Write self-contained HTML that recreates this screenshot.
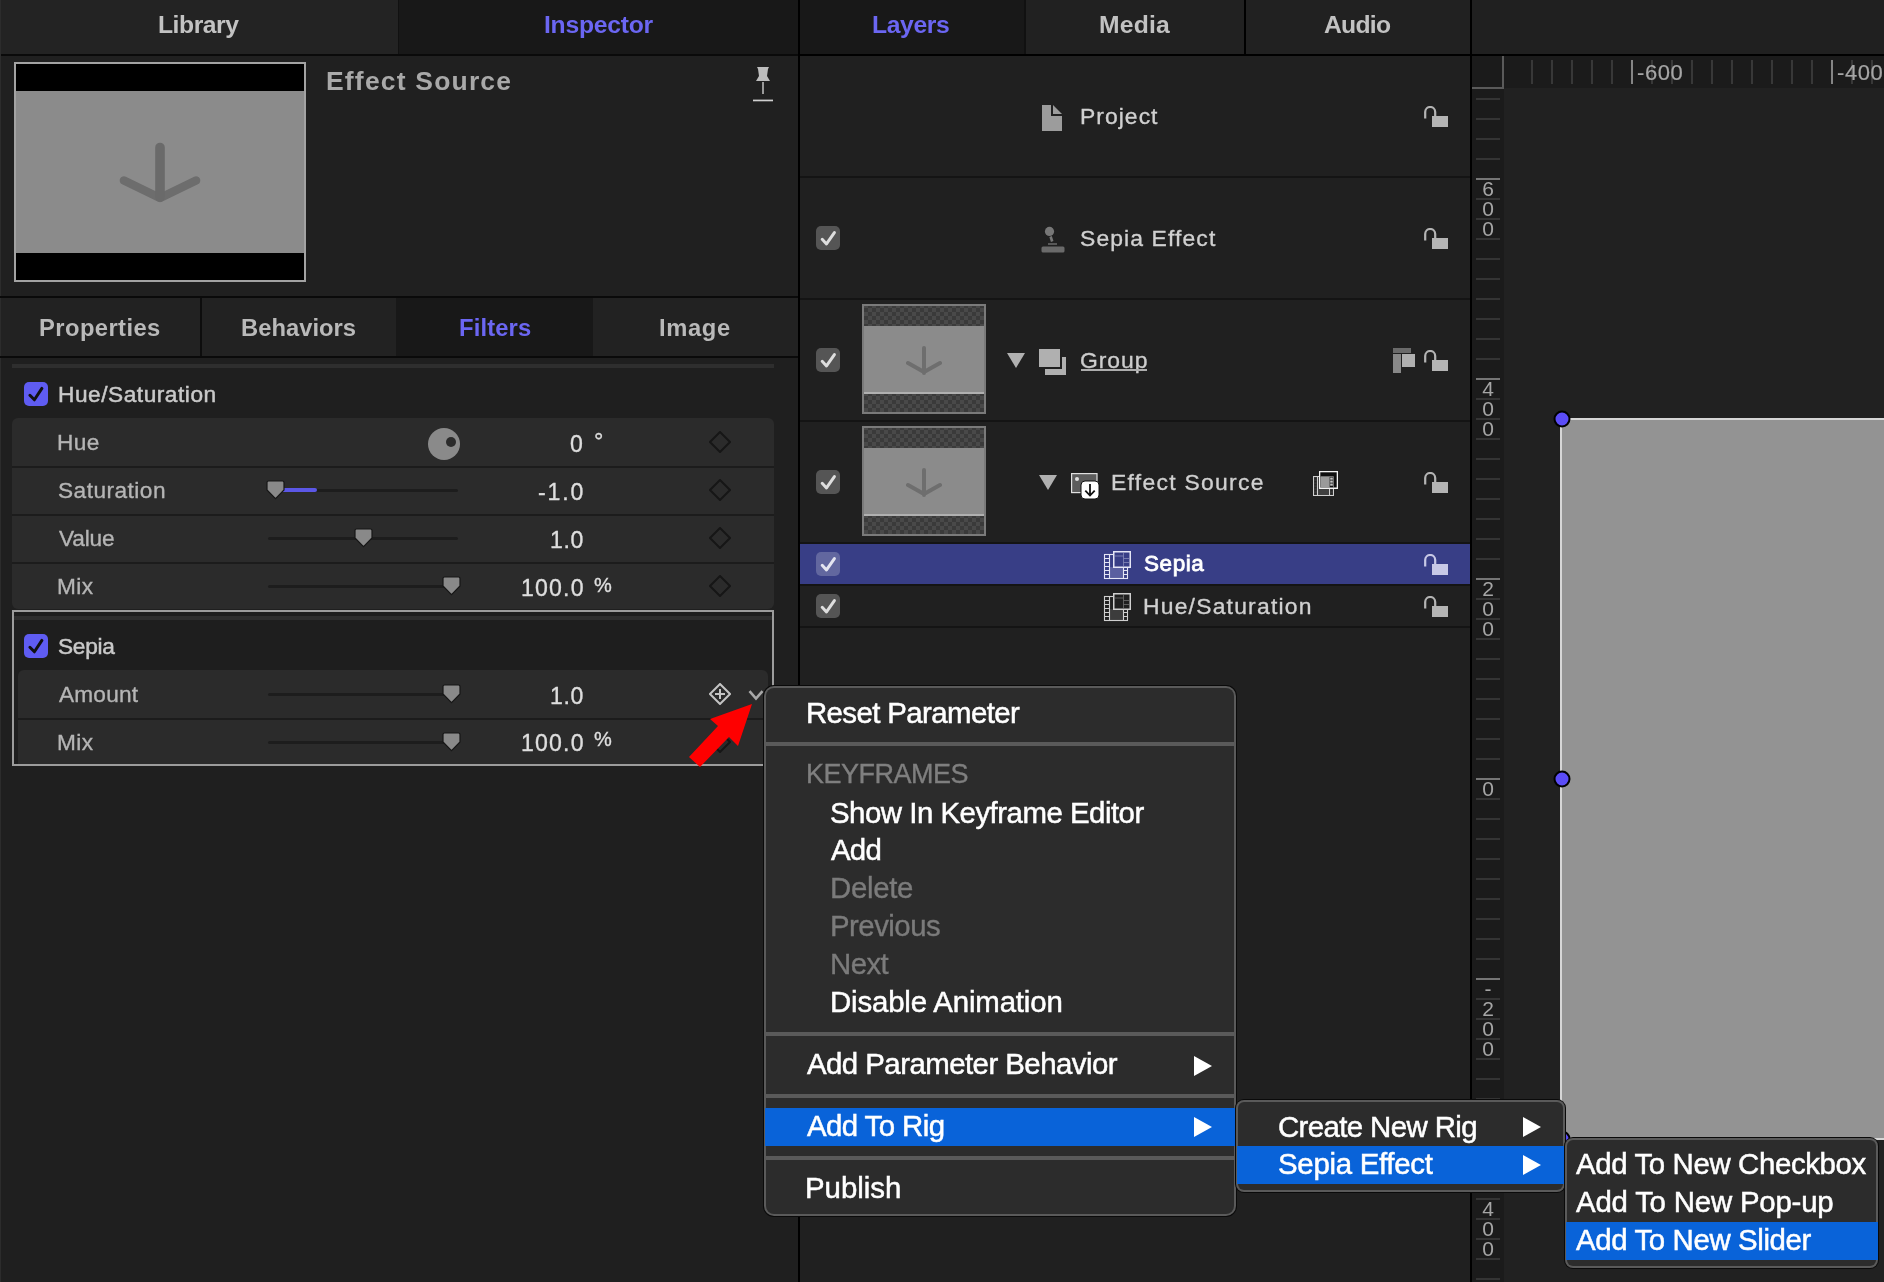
<!DOCTYPE html><html><head><meta charset="utf-8"><style>body{margin:0;-webkit-font-smoothing:antialiased;width:1884px;height:1282px;overflow:hidden;position:relative;font-family:"Liberation Sans", sans-serif;background:#1f1f1f}</style></head><body><div style="position:absolute;left:0px;top:0px;width:1884px;height:1282px;background:#1f1f1f;"></div>
<div style="position:absolute;left:0px;top:0px;width:798px;height:1282px;background:#1f1f1f;"></div>
<div style="position:absolute;left:0px;top:0px;width:398px;height:54px;background:#232323;"></div>
<div style="position:absolute;left:398px;top:0px;width:1px;height:54px;background:#111;"></div>
<div style="position:absolute;left:399px;top:0px;width:399px;height:54px;background:#181818;"></div>
<div style="position:absolute;left:0px;top:54px;width:798px;height:2px;background:#0a0a0a;"></div>
<div style="position:absolute;left:158.21px;top:13.44px;font-size:24.7px;line-height:1;color:#c2c2c2;font-weight:700;letter-spacing:-0.462px;white-space:nowrap;will-change:transform;">Library</div>
<div style="position:absolute;left:544.00px;top:13.34px;font-size:24.7px;line-height:1;color:#6b66f2;font-weight:700;letter-spacing:-0.250px;white-space:nowrap;will-change:transform;">Inspector</div>
<div style="position:absolute;left:0px;top:0px;width:1px;height:1282px;background:#2c2c2c;"></div>
<div style="position:absolute;left:1px;top:56px;width:797px;height:240px;background:#202020;"></div>
<div style="position:absolute;left:14px;top:62px;width:292px;height:220px;background:#a3a3a3;"></div>
<div style="position:absolute;left:16px;top:64px;width:288px;height:216px;background:#000;"></div>
<div style="position:absolute;left:16px;top:91px;width:288px;height:162px;background:#8b8b8b;"></div>
<svg style="position:absolute;left:115px;top:140px" width="90" height="70" viewBox="0 0 90 70"><path d="M9 40.5 L45 58 L81 40.5" fill="none" stroke="#6d6d6d" stroke-width="8.6" stroke-linejoin="round" stroke-linecap="round"/><path d="M45 7.5 V57" fill="none" stroke="#6a6a6a" stroke-width="9.6" stroke-linecap="round"/></svg>
<div style="position:absolute;left:326.19px;top:67.91px;font-size:26.5px;line-height:1;color:#a9a9a9;font-weight:700;letter-spacing:1.184px;white-space:nowrap;will-change:transform;">Effect Source</div>
<svg style="position:absolute;left:753px;top:66px" width="20" height="36" viewBox="0 0 20 36"><path d="M4 1 H16 L15 3 L14 10 L17 15 H3 L6 10 L5 3 Z" fill="#bdbdbd"/><rect x="9" y="16" width="2" height="12" fill="#9a9a9a"/><rect x="0" y="33.6" width="20" height="1.7" fill="#d0d0d0"/></svg>
<div style="position:absolute;left:0px;top:296px;width:798px;height:2px;background:#0a0a0a;"></div>
<div style="position:absolute;left:1px;top:298px;width:199px;height:58px;background:#222222;"></div>
<div style="position:absolute;left:200px;top:298px;width:2px;height:58px;background:#0d0d0d;"></div>
<div style="position:absolute;left:202px;top:298px;width:194px;height:58px;background:#222222;"></div>
<div style="position:absolute;left:396px;top:298px;width:197px;height:58px;background:#181818;"></div>
<div style="position:absolute;left:593px;top:298px;width:205px;height:58px;background:#222222;"></div>
<div style="position:absolute;left:0px;top:356px;width:798px;height:2px;background:#0a0a0a;"></div>
<div style="position:absolute;left:38.67px;top:316.04px;font-size:23.75px;line-height:1;color:#b9b9b9;font-weight:700;letter-spacing:0.428px;white-space:nowrap;will-change:transform;">Properties</div>
<div style="position:absolute;left:240.87px;top:316.04px;font-size:23.75px;line-height:1;color:#b9b9b9;font-weight:700;letter-spacing:0.029px;white-space:nowrap;will-change:transform;">Behaviors</div>
<div style="position:absolute;left:458.77px;top:316.04px;font-size:23.75px;line-height:1;color:#6b66f2;font-weight:700;letter-spacing:0.152px;white-space:nowrap;will-change:transform;">Filters</div>
<div style="position:absolute;left:659.47px;top:316.04px;font-size:23.75px;line-height:1;color:#b9b9b9;font-weight:700;letter-spacing:0.633px;white-space:nowrap;will-change:transform;">Image</div>
<div style="position:absolute;left:12px;top:364px;width:762px;height:4px;background:#2e2e2e;"></div>
<svg style="position:absolute;left:24px;top:382px" width="24" height="24" viewBox="0 0 24 24"><rect x="0" y="0" width="24" height="24" rx="5" fill="#5f5cf2"/><path d="M5.9 13.3 L10.4 17.8 L17.9 6.4" fill="none" stroke="#111" stroke-width="3" stroke-linecap="round" stroke-linejoin="round"/></svg>
<div style="position:absolute;left:57.50px;top:382.86px;font-size:22.66px;line-height:1;color:#c9c9c9;font-weight:400;letter-spacing:0.538px;white-space:nowrap;will-change:transform;-webkit-text-stroke-width:0.5px;">Hue/Saturation</div>
<div style="position:absolute;left:12px;top:418px;width:762px;height:191px;background:#2b2b2b;border-radius:6px"></div>
<div style="position:absolute;left:12px;top:466px;width:762px;height:2px;background:#1c1c1c;"></div>
<div style="position:absolute;left:12px;top:514px;width:762px;height:2px;background:#1c1c1c;"></div>
<div style="position:absolute;left:12px;top:562px;width:762px;height:2px;background:#1c1c1c;"></div>
<div style="position:absolute;left:57.10px;top:431.26px;font-size:22.66px;line-height:1;color:#b5b5b5;font-weight:400;letter-spacing:0.450px;white-space:nowrap;will-change:transform;-webkit-text-stroke-width:0.35px;">Hue</div>
<div style="position:absolute;left:57.69px;top:479.36px;font-size:22.66px;line-height:1;color:#b5b5b5;font-weight:400;letter-spacing:0.471px;white-space:nowrap;will-change:transform;-webkit-text-stroke-width:0.35px;">Saturation</div>
<div style="position:absolute;left:58.65px;top:527.06px;font-size:22.66px;line-height:1;color:#b5b5b5;font-weight:400;letter-spacing:-0.162px;white-space:nowrap;will-change:transform;-webkit-text-stroke-width:0.35px;">Value</div>
<div style="position:absolute;left:57.10px;top:575.16px;font-size:22.66px;line-height:1;color:#b5b5b5;font-weight:400;letter-spacing:0.390px;white-space:nowrap;will-change:transform;-webkit-text-stroke-width:0.35px;">Mix</div>
<svg style="position:absolute;left:428px;top:428px" width="32" height="32" viewBox="0 0 32 32"><circle cx="16" cy="16" r="16" fill="#8a8a8a"/><circle cx="23" cy="14" r="5" fill="#2b2b2b"/></svg>
<div style="position:absolute;left:268px;top:488.5px;width:190px;height:3px;background:#1d1d1d;border-radius:1.5px"></div>
<div style="position:absolute;left:268px;top:536.5px;width:190px;height:3px;background:#1d1d1d;border-radius:1.5px"></div>
<div style="position:absolute;left:268px;top:584.5px;width:190px;height:3px;background:#1d1d1d;border-radius:1.5px"></div>
<div style="position:absolute;left:275px;top:488px;width:42px;height:4px;background:#5b57e6;border-radius:2px"></div>
<svg style="position:absolute;left:265.5px;top:480px" width="19" height="20" viewBox="0 0 19 20"><path d="M2.5 1 H16.5 Q18 1 18 2.5 V10 L9.5 18.6 L1 10 V2.5 Q1 1 2.5 1 Z" fill="#898989" stroke="#171717" stroke-width="1.2"/></svg>
<svg style="position:absolute;left:353.5px;top:528px" width="19" height="20" viewBox="0 0 19 20"><path d="M2.5 1 H16.5 Q18 1 18 2.5 V10 L9.5 18.6 L1 10 V2.5 Q1 1 2.5 1 Z" fill="#898989" stroke="#171717" stroke-width="1.2"/></svg>
<svg style="position:absolute;left:441.5px;top:576px" width="19" height="20" viewBox="0 0 19 20"><path d="M2.5 1 H16.5 Q18 1 18 2.5 V10 L9.5 18.6 L1 10 V2.5 Q1 1 2.5 1 Z" fill="#898989" stroke="#171717" stroke-width="1.2"/></svg>
<div style="position:absolute;left:569.59px;top:432.99px;font-size:23.1px;line-height:1;color:#dedede;font-weight:400;letter-spacing:0.000px;white-space:nowrap;will-change:transform;-webkit-text-stroke-width:0.35px;">0</div>
<div style="position:absolute;left:593.5px;top:429.9px;font-size:23.5px;line-height:1;color:#dedede;font-weight:400;letter-spacing:0px;white-space:nowrap;will-change:transform;-webkit-text-stroke-width:0.35px;">°</div>
<div style="position:absolute;left:538.19px;top:480.99px;font-size:23.1px;line-height:1;color:#dedede;font-weight:400;letter-spacing:1.830px;white-space:nowrap;will-change:transform;-webkit-text-stroke-width:0.35px;">-1.0</div>
<div style="position:absolute;left:549.50px;top:528.99px;font-size:23.1px;line-height:1;color:#dedede;font-weight:400;letter-spacing:0.650px;white-space:nowrap;will-change:transform;-webkit-text-stroke-width:0.35px;">1.0</div>
<div style="position:absolute;left:521.00px;top:576.99px;font-size:23.1px;line-height:1;color:#dedede;font-weight:400;letter-spacing:1.170px;white-space:nowrap;will-change:transform;-webkit-text-stroke-width:0.35px;">100.0</div>
<div style="position:absolute;left:594px;top:575.07px;font-size:20px;line-height:1;color:#dedede;font-weight:400;letter-spacing:0px;white-space:nowrap;will-change:transform;-webkit-text-stroke-width:0.35px;">%</div>
<svg style="position:absolute;left:709px;top:431px" width="22" height="22" viewBox="0 0 22 22"><path d="M11 1 L21 11 L11 21 L1 11 Z" fill="none" stroke="#161616" stroke-width="2"/></svg>
<svg style="position:absolute;left:709px;top:479px" width="22" height="22" viewBox="0 0 22 22"><path d="M11 1 L21 11 L11 21 L1 11 Z" fill="none" stroke="#161616" stroke-width="2"/></svg>
<svg style="position:absolute;left:709px;top:527px" width="22" height="22" viewBox="0 0 22 22"><path d="M11 1 L21 11 L11 21 L1 11 Z" fill="none" stroke="#161616" stroke-width="2"/></svg>
<svg style="position:absolute;left:709px;top:575px" width="22" height="22" viewBox="0 0 22 22"><path d="M11 1 L21 11 L11 21 L1 11 Z" fill="none" stroke="#161616" stroke-width="2"/></svg>
<div style="position:absolute;left:12px;top:610px;width:762px;height:156px;background:#9c9c9c;"></div>
<div style="position:absolute;left:14px;top:612px;width:758px;height:152px;background:#1e1e1e;"></div>
<div style="position:absolute;left:14px;top:616px;width:758px;height:4px;background:#2e2e2e;"></div>
<svg style="position:absolute;left:24px;top:634px" width="24" height="24" viewBox="0 0 24 24"><rect x="0" y="0" width="24" height="24" rx="5" fill="#5f5cf2"/><path d="M5.9 13.3 L10.4 17.8 L17.9 6.4" fill="none" stroke="#111" stroke-width="3" stroke-linecap="round" stroke-linejoin="round"/></svg>
<div style="position:absolute;left:57.76px;top:635.06px;font-size:22.66px;line-height:1;color:#c9c9c9;font-weight:400;letter-spacing:-0.273px;white-space:nowrap;will-change:transform;-webkit-text-stroke-width:0.5px;">Sepia</div>
<div style="position:absolute;left:18px;top:670px;width:750px;height:94px;background:#2b2b2b;border-radius:6px 6px 0 0"></div>
<div style="position:absolute;left:18px;top:718px;width:750px;height:2px;background:#1c1c1c;"></div>
<div style="position:absolute;left:58.67px;top:683.36px;font-size:22.66px;line-height:1;color:#b5b5b5;font-weight:400;letter-spacing:0.190px;white-space:nowrap;will-change:transform;-webkit-text-stroke-width:0.35px;">Amount</div>
<div style="position:absolute;left:57.10px;top:731.16px;font-size:22.66px;line-height:1;color:#b5b5b5;font-weight:400;letter-spacing:0.390px;white-space:nowrap;will-change:transform;-webkit-text-stroke-width:0.35px;">Mix</div>
<div style="position:absolute;left:268px;top:692.5px;width:190px;height:3px;background:#1d1d1d;border-radius:1.5px"></div>
<div style="position:absolute;left:268px;top:740.5px;width:190px;height:3px;background:#1d1d1d;border-radius:1.5px"></div>
<svg style="position:absolute;left:441.5px;top:684px" width="19" height="20" viewBox="0 0 19 20"><path d="M2.5 1 H16.5 Q18 1 18 2.5 V10 L9.5 18.6 L1 10 V2.5 Q1 1 2.5 1 Z" fill="#898989" stroke="#171717" stroke-width="1.2"/></svg>
<svg style="position:absolute;left:441.5px;top:732px" width="19" height="20" viewBox="0 0 19 20"><path d="M2.5 1 H16.5 Q18 1 18 2.5 V10 L9.5 18.6 L1 10 V2.5 Q1 1 2.5 1 Z" fill="#898989" stroke="#171717" stroke-width="1.2"/></svg>
<div style="position:absolute;left:549.50px;top:684.59px;font-size:23.1px;line-height:1;color:#dedede;font-weight:400;letter-spacing:0.650px;white-space:nowrap;will-change:transform;-webkit-text-stroke-width:0.35px;">1.0</div>
<div style="position:absolute;left:521.00px;top:732.29px;font-size:23.1px;line-height:1;color:#dedede;font-weight:400;letter-spacing:1.170px;white-space:nowrap;will-change:transform;-webkit-text-stroke-width:0.35px;">100.0</div>
<div style="position:absolute;left:594px;top:729.07px;font-size:20px;line-height:1;color:#dedede;font-weight:400;letter-spacing:0px;white-space:nowrap;will-change:transform;-webkit-text-stroke-width:0.35px;">%</div>
<svg style="position:absolute;left:709px;top:731px" width="22" height="22" viewBox="0 0 22 22"><path d="M11 1 L21 11 L11 21 L1 11 Z" fill="none" stroke="#161616" stroke-width="2"/></svg>
<svg style="position:absolute;left:709px;top:683px" width="22" height="22" viewBox="0 0 22 22"><path d="M11 1 L21 11 L11 21 L1 11 Z" fill="none" stroke="#c4c4c4" stroke-width="2"/><path d="M11 6 V16 M6 11 H16" stroke="#c4c4c4" stroke-width="2"/></svg>
<svg style="position:absolute;left:748px;top:689px" width="16" height="12" viewBox="0 0 16 12"><path d="M1.5 2.2 L8 9.6 L14.5 2.2" fill="none" stroke="#a8a8a8" stroke-width="2.6"/></svg>
<svg style="position:absolute;left:0px;top:0px" width="800" height="800" viewBox="0 0 800 800"><path d="M752 704 L738 746 L729 737 L700 767 L689 757 L718 726 L710 719 Z" fill="#fe0000"/></svg>
<div style="position:absolute;left:798px;top:0px;width:2px;height:1282px;background:#000;"></div>
<div style="position:absolute;left:800px;top:0px;width:670px;height:1282px;background:#202020;"></div>
<div style="position:absolute;left:800px;top:0px;width:224px;height:54px;background:#181818;"></div>
<div style="position:absolute;left:1024px;top:0px;width:2px;height:54px;background:#111;"></div>
<div style="position:absolute;left:1026px;top:0px;width:218px;height:54px;background:#212121;"></div>
<div style="position:absolute;left:1244px;top:0px;width:2px;height:54px;background:#000;"></div>
<div style="position:absolute;left:1246px;top:0px;width:224px;height:54px;background:#212121;"></div>
<div style="position:absolute;left:800px;top:54px;width:670px;height:2px;background:#000;"></div>
<div style="position:absolute;left:872.21px;top:13.34px;font-size:24.7px;line-height:1;color:#6b66f2;font-weight:700;letter-spacing:-0.362px;white-space:nowrap;will-change:transform;">Layers</div>
<div style="position:absolute;left:1098.61px;top:13.34px;font-size:24.7px;line-height:1;color:#c2c2c2;font-weight:700;letter-spacing:0.175px;white-space:nowrap;will-change:transform;">Media</div>
<div style="position:absolute;left:1324.17px;top:13.34px;font-size:24.7px;line-height:1;color:#c2c2c2;font-weight:700;letter-spacing:-0.743px;white-space:nowrap;will-change:transform;">Audio</div>
<div style="position:absolute;left:800px;top:176px;width:670px;height:2px;background:#141414;"></div>
<div style="position:absolute;left:800px;top:298px;width:670px;height:2px;background:#141414;"></div>
<div style="position:absolute;left:800px;top:420px;width:670px;height:2px;background:#141414;"></div>
<div style="position:absolute;left:800px;top:542px;width:670px;height:2px;background:#141414;"></div>
<div style="position:absolute;left:800px;top:584px;width:670px;height:2px;background:#141414;"></div>
<div style="position:absolute;left:800px;top:626px;width:670px;height:2px;background:#141414;"></div>
<div style="position:absolute;left:1470px;top:0px;width:2px;height:1282px;background:#000;"></div>
<svg style="position:absolute;left:1042px;top:105px" width="20" height="26" viewBox="0 0 20 26"><path d="M0 0 H9 V11 H20 V26 H0 Z" fill="#9c9c9c"/><path d="M11 0 L20 9 H11 Z" fill="#9c9c9c"/></svg>
<div style="position:absolute;left:1079.97px;top:105.06px;font-size:22.9px;line-height:1;color:#d0d0d0;font-weight:400;letter-spacing:1.038px;white-space:nowrap;will-change:transform;-webkit-text-stroke-width:0.35px;">Project</div>
<svg style="position:absolute;left:1424px;top:106px" width="24" height="22" viewBox="0 0 24 22"><path d="M1.2 12.5 V6 A5 5 0 0 1 11.2 6 V11" fill="none" stroke="#b4b4b4" stroke-width="2.2"/><rect x="8" y="10" width="16" height="11" fill="#b4b4b4"/></svg>
<svg style="position:absolute;left:816px;top:226px" width="24" height="24" viewBox="0 0 24 24"><rect x="0" y="0" width="24" height="24" rx="5" fill="#555555"/><path d="M6.2 13.3 L10.5 17.9 L18.4 6.6" fill="none" stroke="#dedede" stroke-width="3" stroke-linecap="round" stroke-linejoin="round"/></svg>
<svg style="position:absolute;left:1041px;top:226px" width="24" height="27" viewBox="0 0 24 27"><circle cx="8.5" cy="5.4" r="4.6" fill="#777"/><path d="M9.6 10.5 L11.2 15.5" stroke="#777" stroke-width="2.6"/><rect x="7" y="17" width="9" height="2" fill="#585858"/><rect x="0.5" y="20.5" width="23" height="6" rx="1.5" fill="#6a6a6a"/></svg>
<div style="position:absolute;left:1079.78px;top:227.06px;font-size:22.9px;line-height:1;color:#d0d0d0;font-weight:400;letter-spacing:1.115px;white-space:nowrap;will-change:transform;-webkit-text-stroke-width:0.35px;">Sepia Effect</div>
<svg style="position:absolute;left:1424px;top:228px" width="24" height="22" viewBox="0 0 24 22"><path d="M1.2 12.5 V6 A5 5 0 0 1 11.2 6 V11" fill="none" stroke="#b4b4b4" stroke-width="2.2"/><rect x="8" y="10" width="16" height="11" fill="#b4b4b4"/></svg>
<svg style="position:absolute;left:816px;top:348px" width="24" height="24" viewBox="0 0 24 24"><rect x="0" y="0" width="24" height="24" rx="5" fill="#555555"/><path d="M6.2 13.3 L10.5 17.9 L18.4 6.6" fill="none" stroke="#dedede" stroke-width="3" stroke-linecap="round" stroke-linejoin="round"/></svg>
<div style="position:absolute;left:862px;top:304px;width:124px;height:110px;background:#7a7a7a;"></div>
<div style="position:absolute;left:864px;top:306px;width:120px;height:106px;background:repeating-conic-gradient(#3a3a3a 0% 25%, #494949 0% 50%) 0 -2px/8px 8px;"></div>
<div style="position:absolute;left:864px;top:326px;width:120px;height:66px;background:#8b8b8b;"></div>
<div style="position:absolute;left:864px;top:392px;width:120px;height:2px;background:#b0b0b0;"></div>
<svg style="position:absolute;left:906px;top:346px" width="36" height="30" viewBox="0 0 36 30"><path d="M18 2 V27 M2 17 L18 26 L34 17" fill="none" stroke="#6e6e6e" stroke-width="4" stroke-linecap="round" stroke-linejoin="round"/></svg>
<svg style="position:absolute;left:1007px;top:353px" width="18" height="15" viewBox="0 0 18 15"><path d="M0 0 H18 L9 15 Z" fill="#b0b0b0"/></svg>
<svg style="position:absolute;left:1039px;top:349px" width="28" height="26" viewBox="0 0 28 26"><rect x="6" y="8" width="21" height="18" fill="#b0b0b0"/><rect x="0" y="0" width="23" height="20" fill="#1f1f1f"/><rect x="0" y="0" width="21" height="18" fill="#b0b0b0"/></svg>
<div style="position:absolute;left:1079.70px;top:348.76px;font-size:22.9px;line-height:1;color:#cdcdcd;font-weight:400;letter-spacing:0.950px;white-space:nowrap;will-change:transform;-webkit-text-stroke-width:0.35px;">Group</div>
<div style="position:absolute;left:1080.5px;top:369.2px;width:66.5px;height:1.8px;background:#adadad;"></div>
<svg style="position:absolute;left:1393px;top:348px" width="22" height="25" viewBox="0 0 22 25"><rect x="0" y="0" width="18" height="5" fill="#6a6a6a"/><rect x="0" y="6" width="8" height="19" fill="#888"/><rect x="9" y="6" width="13" height="13" fill="#b0b0b0"/></svg>
<svg style="position:absolute;left:1424px;top:350px" width="24" height="22" viewBox="0 0 24 22"><path d="M1.2 12.5 V6 A5 5 0 0 1 11.2 6 V11" fill="none" stroke="#b4b4b4" stroke-width="2.2"/><rect x="8" y="10" width="16" height="11" fill="#b4b4b4"/></svg>
<svg style="position:absolute;left:816px;top:470px" width="24" height="24" viewBox="0 0 24 24"><rect x="0" y="0" width="24" height="24" rx="5" fill="#555555"/><path d="M6.2 13.3 L10.5 17.9 L18.4 6.6" fill="none" stroke="#dedede" stroke-width="3" stroke-linecap="round" stroke-linejoin="round"/></svg>
<div style="position:absolute;left:862px;top:426px;width:124px;height:110px;background:#7a7a7a;"></div>
<div style="position:absolute;left:864px;top:428px;width:120px;height:106px;background:repeating-conic-gradient(#3a3a3a 0% 25%, #494949 0% 50%) 0 -2px/8px 8px;"></div>
<div style="position:absolute;left:864px;top:448px;width:120px;height:66px;background:#8b8b8b;"></div>
<div style="position:absolute;left:864px;top:514px;width:120px;height:2px;background:#b0b0b0;"></div>
<svg style="position:absolute;left:906px;top:468px" width="36" height="30" viewBox="0 0 36 30"><path d="M18 2 V27 M2 17 L18 26 L34 17" fill="none" stroke="#6e6e6e" stroke-width="4" stroke-linecap="round" stroke-linejoin="round"/></svg>
<svg style="position:absolute;left:1039px;top:475px" width="18" height="15" viewBox="0 0 18 15"><path d="M0 0 H18 L9 15 Z" fill="#b0b0b0"/></svg>
<svg style="position:absolute;left:1071px;top:473px" width="29" height="27" viewBox="0 0 29 27"><rect x="0.6" y="0.6" width="25.4" height="19" fill="#5c5c5c" stroke="#e0e0e0" stroke-width="1.2"/><circle cx="6" cy="6" r="2" fill="#e0e0e0"/><rect x="10" y="8" width="18" height="18" rx="4" fill="#fff" stroke="#111" stroke-width="1"/><path d="M19 11 V22.5 M14.3 17.6 L19 22.5 L23.7 17.6" fill="none" stroke="#111" stroke-width="1.8"/></svg>
<div style="position:absolute;left:1111.37px;top:470.76px;font-size:22.9px;line-height:1;color:#d0d0d0;font-weight:400;letter-spacing:1.290px;white-space:nowrap;will-change:transform;-webkit-text-stroke-width:0.35px;">Effect Source</div>
<svg style="position:absolute;left:1313px;top:471px" width="25" height="25" viewBox="0 0 25 25"><rect x="0.5" y="5.5" width="20" height="19" fill="#404040" stroke="#cfcfcf" stroke-width="1"/><path d="M4.5 5.5 V24.5 M16.5 5.5 V24.5" stroke="#cfcfcf" stroke-width="1"/><rect x="1.4" y="6.6" width="2.2" height="2" fill="#262626"/><rect x="17.4" y="6.6" width="2.2" height="2" fill="#262626"/><rect x="1.4" y="9.6" width="2.2" height="2" fill="#262626"/><rect x="17.4" y="9.6" width="2.2" height="2" fill="#262626"/><rect x="1.4" y="12.6" width="2.2" height="2" fill="#262626"/><rect x="17.4" y="12.6" width="2.2" height="2" fill="#262626"/><rect x="1.4" y="15.6" width="2.2" height="2" fill="#262626"/><rect x="17.4" y="15.6" width="2.2" height="2" fill="#262626"/><rect x="1.4" y="18.6" width="2.2" height="2" fill="#262626"/><rect x="17.4" y="18.6" width="2.2" height="2" fill="#262626"/><rect x="1.4" y="21.6" width="2.2" height="2" fill="#262626"/><rect x="17.4" y="21.6" width="2.2" height="2" fill="#262626"/><rect x="6.65" y="0.65" width="17.7" height="16.7" fill="#0e0e0e" stroke="#f2f2f2" stroke-width="1.3"/><rect x="7.4" y="6" width="9.1" height="10.5" fill="#9a9a9a"/><path d="M7.3 5.5 H20.5 V16.7 M16.5 5.5 V16.7" fill="none" stroke="#6e6e6e" stroke-width="1"/><rect x="17.2" y="6.5" width="2.6" height="2.2" fill="#c4c4c4"/><rect x="17.2" y="9.5" width="2.6" height="2.2" fill="#c4c4c4"/><rect x="17.2" y="12.5" width="2.6" height="2.2" fill="#c4c4c4"/><path d="M6.65 17.35 H24.35" stroke="#f2f2f2" stroke-width="1.3"/></svg>
<svg style="position:absolute;left:1424px;top:472px" width="24" height="22" viewBox="0 0 24 22"><path d="M1.2 12.5 V6 A5 5 0 0 1 11.2 6 V11" fill="none" stroke="#b4b4b4" stroke-width="2.2"/><rect x="8" y="10" width="16" height="11" fill="#b4b4b4"/></svg>
<div style="position:absolute;left:800px;top:544px;width:670px;height:40px;background:#383e86;"></div>
<svg style="position:absolute;left:816px;top:552px" width="24" height="24" viewBox="0 0 24 24"><rect x="0" y="0" width="24" height="24" rx="5" fill="#62679f"/><path d="M6.2 13.3 L10.5 17.9 L18.4 6.6" fill="none" stroke="#e4e5f0" stroke-width="3" stroke-linecap="round" stroke-linejoin="round"/></svg>
<svg style="position:absolute;left:1103px;top:550px" width="28" height="30" viewBox="0 0 28 30"><rect x="6.5" y="17" width="14" height="11.5" fill="#5a5fa0"/><rect x="1.5" y="4.5" width="23" height="24" fill="none" stroke="#e4e5f5" stroke-width="1.1"/><path d="M6.5 4.5 V28.5 M20.5 4.5 V28.5" stroke="#e4e5f5" stroke-width="1.1"/><path d="M1.5 8.5 H6.5 M20.5 8.5 H24.5" stroke="#e4e5f5" stroke-width="1.1"/><path d="M1.5 12.5 H6.5 M20.5 12.5 H24.5" stroke="#e4e5f5" stroke-width="1.1"/><path d="M1.5 16.5 H6.5 M20.5 16.5 H24.5" stroke="#e4e5f5" stroke-width="1.1"/><path d="M1.5 20.5 H6.5 M20.5 20.5 H24.5" stroke="#e4e5f5" stroke-width="1.1"/><path d="M1.5 24.5 H6.5 M20.5 24.5 H24.5" stroke="#e4e5f5" stroke-width="1.1"/><rect x="10.75" y="1.75" width="16.5" height="15.5" fill="#383e86" stroke="#e4e5f5" stroke-width="1.5"/><path d="M12 6 H20.5 M20.5 3 V16 M20.5 8.5 H26 M20.5 12.5 H26" stroke="#e4e5f5" stroke-width="0.8" opacity="0.45"/></svg>
<div style="position:absolute;left:1144.12px;top:552.50px;font-size:22.5px;line-height:1;color:#ffffff;font-weight:400;letter-spacing:0.570px;white-space:nowrap;will-change:transform;-webkit-text-stroke-width:0.8px;">Sepia</div>
<svg style="position:absolute;left:1424px;top:554px" width="24" height="22" viewBox="0 0 24 22"><path d="M1.2 12.5 V6 A5 5 0 0 1 11.2 6 V11" fill="none" stroke="#c8c9e6" stroke-width="2.2"/><rect x="8" y="10" width="16" height="11" fill="#c8c9e6"/></svg>
<svg style="position:absolute;left:816px;top:594px" width="24" height="24" viewBox="0 0 24 24"><rect x="0" y="0" width="24" height="24" rx="5" fill="#555555"/><path d="M6.2 13.3 L10.5 17.9 L18.4 6.6" fill="none" stroke="#dedede" stroke-width="3" stroke-linecap="round" stroke-linejoin="round"/></svg>
<svg style="position:absolute;left:1103px;top:592px" width="28" height="30" viewBox="0 0 28 30"><rect x="6.5" y="17" width="14" height="11.5" fill="#3c3c3c"/><rect x="1.5" y="4.5" width="23" height="24" fill="none" stroke="#cfcfcf" stroke-width="1.1"/><path d="M6.5 4.5 V28.5 M20.5 4.5 V28.5" stroke="#cfcfcf" stroke-width="1.1"/><path d="M1.5 8.5 H6.5 M20.5 8.5 H24.5" stroke="#cfcfcf" stroke-width="1.1"/><path d="M1.5 12.5 H6.5 M20.5 12.5 H24.5" stroke="#cfcfcf" stroke-width="1.1"/><path d="M1.5 16.5 H6.5 M20.5 16.5 H24.5" stroke="#cfcfcf" stroke-width="1.1"/><path d="M1.5 20.5 H6.5 M20.5 20.5 H24.5" stroke="#cfcfcf" stroke-width="1.1"/><path d="M1.5 24.5 H6.5 M20.5 24.5 H24.5" stroke="#cfcfcf" stroke-width="1.1"/><rect x="10.75" y="1.75" width="16.5" height="15.5" fill="#1f1f1f" stroke="#cfcfcf" stroke-width="1.5"/><path d="M12 6 H20.5 M20.5 3 V16 M20.5 8.5 H26 M20.5 12.5 H26" stroke="#cfcfcf" stroke-width="0.8" opacity="0.45"/></svg>
<div style="position:absolute;left:1143.27px;top:594.56px;font-size:22.9px;line-height:1;color:#d0d0d0;font-weight:400;letter-spacing:1.210px;white-space:nowrap;will-change:transform;-webkit-text-stroke-width:0.35px;">Hue/Saturation</div>
<svg style="position:absolute;left:1424px;top:596px" width="24" height="22" viewBox="0 0 24 22"><path d="M1.2 12.5 V6 A5 5 0 0 1 11.2 6 V11" fill="none" stroke="#b4b4b4" stroke-width="2.2"/><rect x="8" y="10" width="16" height="11" fill="#b4b4b4"/></svg>
<div style="position:absolute;left:1472px;top:0px;width:412px;height:54px;background:#202020;"></div>
<div style="position:absolute;left:1472px;top:54px;width:412px;height:2px;background:#000;"></div>
<div style="position:absolute;left:1472px;top:56px;width:412px;height:1226px;background:#212121;"></div>
<div style="position:absolute;left:1472px;top:56px;width:32px;height:33px;background:#1b1b1b;"></div>
<div style="position:absolute;left:1502px;top:56px;width:2px;height:33px;background:#5a5a5a;"></div>
<div style="position:absolute;left:1472px;top:87px;width:32px;height:2px;background:#5a5a5a;"></div>
<div style="position:absolute;left:1504px;top:56px;width:380px;height:32px;background:#1b1b1b;"></div>
<div style="position:absolute;left:1472px;top:89px;width:32px;height:1193px;background:#1b1b1b;"></div>
<div style="position:absolute;left:1531px;top:60px;width:2px;height:24px;background:#383838;"></div>
<div style="position:absolute;left:1551px;top:60px;width:2px;height:24px;background:#383838;"></div>
<div style="position:absolute;left:1571px;top:60px;width:2px;height:24px;background:#383838;"></div>
<div style="position:absolute;left:1591px;top:60px;width:2px;height:24px;background:#383838;"></div>
<div style="position:absolute;left:1611px;top:60px;width:2px;height:24px;background:#383838;"></div>
<div style="position:absolute;left:1631px;top:60px;width:2px;height:24px;background:#858585;"></div>
<div style="position:absolute;left:1651px;top:60px;width:2px;height:24px;background:#383838;"></div>
<div style="position:absolute;left:1671px;top:60px;width:2px;height:24px;background:#383838;"></div>
<div style="position:absolute;left:1691px;top:60px;width:2px;height:24px;background:#383838;"></div>
<div style="position:absolute;left:1711px;top:60px;width:2px;height:24px;background:#383838;"></div>
<div style="position:absolute;left:1731px;top:60px;width:2px;height:24px;background:#383838;"></div>
<div style="position:absolute;left:1751px;top:60px;width:2px;height:24px;background:#383838;"></div>
<div style="position:absolute;left:1771px;top:60px;width:2px;height:24px;background:#383838;"></div>
<div style="position:absolute;left:1791px;top:60px;width:2px;height:24px;background:#383838;"></div>
<div style="position:absolute;left:1811px;top:60px;width:2px;height:24px;background:#383838;"></div>
<div style="position:absolute;left:1831px;top:60px;width:2px;height:24px;background:#858585;"></div>
<div style="position:absolute;left:1851px;top:60px;width:2px;height:24px;background:#383838;"></div>
<div style="position:absolute;left:1871px;top:60px;width:2px;height:24px;background:#383838;"></div>
<div style="position:absolute;left:1637px;top:61.87px;font-size:22px;line-height:1;color:#a6a6a6;font-weight:400;letter-spacing:0.6px;white-space:nowrap;will-change:transform;-webkit-text-stroke-width:0.2px;">-600</div>
<div style="position:absolute;left:1837px;top:61.87px;font-size:22px;line-height:1;color:#a6a6a6;font-weight:400;letter-spacing:0.6px;white-space:nowrap;will-change:transform;-webkit-text-stroke-width:0.2px;">-400</div>
<div style="position:absolute;left:1476px;top:98px;width:24px;height:2px;background:#343434;"></div>
<div style="position:absolute;left:1476px;top:118px;width:24px;height:2px;background:#343434;"></div>
<div style="position:absolute;left:1476px;top:138px;width:24px;height:2px;background:#343434;"></div>
<div style="position:absolute;left:1476px;top:158px;width:24px;height:2px;background:#343434;"></div>
<div style="position:absolute;left:1476px;top:178px;width:24px;height:2px;background:#767676;"></div>
<div style="position:absolute;left:1476px;top:198px;width:24px;height:2px;background:#343434;"></div>
<div style="position:absolute;left:1476px;top:218px;width:24px;height:2px;background:#343434;"></div>
<div style="position:absolute;left:1476px;top:238px;width:24px;height:2px;background:#343434;"></div>
<div style="position:absolute;left:1476px;top:258px;width:24px;height:2px;background:#343434;"></div>
<div style="position:absolute;left:1476px;top:278px;width:24px;height:2px;background:#343434;"></div>
<div style="position:absolute;left:1476px;top:298px;width:24px;height:2px;background:#343434;"></div>
<div style="position:absolute;left:1476px;top:318px;width:24px;height:2px;background:#343434;"></div>
<div style="position:absolute;left:1476px;top:338px;width:24px;height:2px;background:#343434;"></div>
<div style="position:absolute;left:1476px;top:358px;width:24px;height:2px;background:#343434;"></div>
<div style="position:absolute;left:1476px;top:378px;width:24px;height:2px;background:#767676;"></div>
<div style="position:absolute;left:1476px;top:398px;width:24px;height:2px;background:#343434;"></div>
<div style="position:absolute;left:1476px;top:418px;width:24px;height:2px;background:#343434;"></div>
<div style="position:absolute;left:1476px;top:438px;width:24px;height:2px;background:#343434;"></div>
<div style="position:absolute;left:1476px;top:458px;width:24px;height:2px;background:#343434;"></div>
<div style="position:absolute;left:1476px;top:478px;width:24px;height:2px;background:#343434;"></div>
<div style="position:absolute;left:1476px;top:498px;width:24px;height:2px;background:#343434;"></div>
<div style="position:absolute;left:1476px;top:518px;width:24px;height:2px;background:#343434;"></div>
<div style="position:absolute;left:1476px;top:538px;width:24px;height:2px;background:#343434;"></div>
<div style="position:absolute;left:1476px;top:558px;width:24px;height:2px;background:#343434;"></div>
<div style="position:absolute;left:1476px;top:578px;width:24px;height:2px;background:#767676;"></div>
<div style="position:absolute;left:1476px;top:598px;width:24px;height:2px;background:#343434;"></div>
<div style="position:absolute;left:1476px;top:618px;width:24px;height:2px;background:#343434;"></div>
<div style="position:absolute;left:1476px;top:638px;width:24px;height:2px;background:#343434;"></div>
<div style="position:absolute;left:1476px;top:658px;width:24px;height:2px;background:#343434;"></div>
<div style="position:absolute;left:1476px;top:678px;width:24px;height:2px;background:#343434;"></div>
<div style="position:absolute;left:1476px;top:698px;width:24px;height:2px;background:#343434;"></div>
<div style="position:absolute;left:1476px;top:718px;width:24px;height:2px;background:#343434;"></div>
<div style="position:absolute;left:1476px;top:738px;width:24px;height:2px;background:#343434;"></div>
<div style="position:absolute;left:1476px;top:758px;width:24px;height:2px;background:#343434;"></div>
<div style="position:absolute;left:1476px;top:778px;width:24px;height:2px;background:#767676;"></div>
<div style="position:absolute;left:1476px;top:798px;width:24px;height:2px;background:#343434;"></div>
<div style="position:absolute;left:1476px;top:818px;width:24px;height:2px;background:#343434;"></div>
<div style="position:absolute;left:1476px;top:838px;width:24px;height:2px;background:#343434;"></div>
<div style="position:absolute;left:1476px;top:858px;width:24px;height:2px;background:#343434;"></div>
<div style="position:absolute;left:1476px;top:878px;width:24px;height:2px;background:#343434;"></div>
<div style="position:absolute;left:1476px;top:898px;width:24px;height:2px;background:#343434;"></div>
<div style="position:absolute;left:1476px;top:918px;width:24px;height:2px;background:#343434;"></div>
<div style="position:absolute;left:1476px;top:938px;width:24px;height:2px;background:#343434;"></div>
<div style="position:absolute;left:1476px;top:958px;width:24px;height:2px;background:#343434;"></div>
<div style="position:absolute;left:1476px;top:978px;width:24px;height:2px;background:#767676;"></div>
<div style="position:absolute;left:1476px;top:998px;width:24px;height:2px;background:#343434;"></div>
<div style="position:absolute;left:1476px;top:1018px;width:24px;height:2px;background:#343434;"></div>
<div style="position:absolute;left:1476px;top:1038px;width:24px;height:2px;background:#343434;"></div>
<div style="position:absolute;left:1476px;top:1058px;width:24px;height:2px;background:#343434;"></div>
<div style="position:absolute;left:1476px;top:1078px;width:24px;height:2px;background:#343434;"></div>
<div style="position:absolute;left:1476px;top:1098px;width:24px;height:2px;background:#343434;"></div>
<div style="position:absolute;left:1476px;top:1118px;width:24px;height:2px;background:#343434;"></div>
<div style="position:absolute;left:1476px;top:1138px;width:24px;height:2px;background:#343434;"></div>
<div style="position:absolute;left:1476px;top:1158px;width:24px;height:2px;background:#343434;"></div>
<div style="position:absolute;left:1476px;top:1178px;width:24px;height:2px;background:#767676;"></div>
<div style="position:absolute;left:1476px;top:1198px;width:24px;height:2px;background:#343434;"></div>
<div style="position:absolute;left:1476px;top:1218px;width:24px;height:2px;background:#343434;"></div>
<div style="position:absolute;left:1476px;top:1238px;width:24px;height:2px;background:#343434;"></div>
<div style="position:absolute;left:1476px;top:1258px;width:24px;height:2px;background:#343434;"></div>
<div style="position:absolute;left:1476px;top:1278px;width:24px;height:2px;background:#343434;"></div>
<div style="position:absolute;left:988px;width:1000px;text-align:center;top:178.22px;font-size:21px;line-height:1;color:#a6a6a6;font-weight:400;letter-spacing:0px;white-space:nowrap;will-change:transform;">6</div>
<div style="position:absolute;left:988px;width:1000px;text-align:center;top:198.22px;font-size:21px;line-height:1;color:#a6a6a6;font-weight:400;letter-spacing:0px;white-space:nowrap;will-change:transform;">0</div>
<div style="position:absolute;left:988px;width:1000px;text-align:center;top:218.22px;font-size:21px;line-height:1;color:#a6a6a6;font-weight:400;letter-spacing:0px;white-space:nowrap;will-change:transform;">0</div>
<div style="position:absolute;left:988px;width:1000px;text-align:center;top:378.22px;font-size:21px;line-height:1;color:#a6a6a6;font-weight:400;letter-spacing:0px;white-space:nowrap;will-change:transform;">4</div>
<div style="position:absolute;left:988px;width:1000px;text-align:center;top:398.22px;font-size:21px;line-height:1;color:#a6a6a6;font-weight:400;letter-spacing:0px;white-space:nowrap;will-change:transform;">0</div>
<div style="position:absolute;left:988px;width:1000px;text-align:center;top:418.22px;font-size:21px;line-height:1;color:#a6a6a6;font-weight:400;letter-spacing:0px;white-space:nowrap;will-change:transform;">0</div>
<div style="position:absolute;left:988px;width:1000px;text-align:center;top:578.22px;font-size:21px;line-height:1;color:#a6a6a6;font-weight:400;letter-spacing:0px;white-space:nowrap;will-change:transform;">2</div>
<div style="position:absolute;left:988px;width:1000px;text-align:center;top:598.22px;font-size:21px;line-height:1;color:#a6a6a6;font-weight:400;letter-spacing:0px;white-space:nowrap;will-change:transform;">0</div>
<div style="position:absolute;left:988px;width:1000px;text-align:center;top:618.22px;font-size:21px;line-height:1;color:#a6a6a6;font-weight:400;letter-spacing:0px;white-space:nowrap;will-change:transform;">0</div>
<div style="position:absolute;left:988px;width:1000px;text-align:center;top:778.22px;font-size:21px;line-height:1;color:#a6a6a6;font-weight:400;letter-spacing:0px;white-space:nowrap;will-change:transform;">0</div>
<div style="position:absolute;left:988px;width:1000px;text-align:center;top:978.22px;font-size:21px;line-height:1;color:#a6a6a6;font-weight:400;letter-spacing:0px;white-space:nowrap;will-change:transform;">-</div>
<div style="position:absolute;left:988px;width:1000px;text-align:center;top:998.22px;font-size:21px;line-height:1;color:#a6a6a6;font-weight:400;letter-spacing:0px;white-space:nowrap;will-change:transform;">2</div>
<div style="position:absolute;left:988px;width:1000px;text-align:center;top:1018.22px;font-size:21px;line-height:1;color:#a6a6a6;font-weight:400;letter-spacing:0px;white-space:nowrap;will-change:transform;">0</div>
<div style="position:absolute;left:988px;width:1000px;text-align:center;top:1038.22px;font-size:21px;line-height:1;color:#a6a6a6;font-weight:400;letter-spacing:0px;white-space:nowrap;will-change:transform;">0</div>
<div style="position:absolute;left:988px;width:1000px;text-align:center;top:1178.22px;font-size:21px;line-height:1;color:#a6a6a6;font-weight:400;letter-spacing:0px;white-space:nowrap;will-change:transform;">-</div>
<div style="position:absolute;left:988px;width:1000px;text-align:center;top:1198.22px;font-size:21px;line-height:1;color:#a6a6a6;font-weight:400;letter-spacing:0px;white-space:nowrap;will-change:transform;">4</div>
<div style="position:absolute;left:988px;width:1000px;text-align:center;top:1218.22px;font-size:21px;line-height:1;color:#a6a6a6;font-weight:400;letter-spacing:0px;white-space:nowrap;will-change:transform;">0</div>
<div style="position:absolute;left:988px;width:1000px;text-align:center;top:1238.22px;font-size:21px;line-height:1;color:#a6a6a6;font-weight:400;letter-spacing:0px;white-space:nowrap;will-change:transform;">0</div>
<div style="position:absolute;left:1560px;top:418px;width:324px;height:722px;background:#d6d6d6;"></div>
<div style="position:absolute;left:1562px;top:420px;width:322px;height:718px;background:#939393;"></div>
<svg style="position:absolute;left:1553px;top:410px" width="18" height="18" viewBox="0 0 18 18"><circle cx="9" cy="9" r="7.5" fill="#5b4cf7" stroke="#000" stroke-width="2"/></svg>
<svg style="position:absolute;left:1553px;top:770px" width="18" height="18" viewBox="0 0 18 18"><circle cx="9" cy="9" r="7.5" fill="#5b4cf7" stroke="#000" stroke-width="2"/></svg>
<svg style="position:absolute;left:1553px;top:1130px" width="18" height="18" viewBox="0 0 18 18"><circle cx="9" cy="9" r="7.5" fill="#5b4cf7" stroke="#000" stroke-width="2"/></svg>
<div style="position:absolute;left:763px;top:685px;width:474px;height:532px;background:#0a0a0a;border-radius:11px"></div>
<div style="position:absolute;left:764px;top:686px;width:472px;height:530px;background:#5a5a5a;border-radius:10px"></div>
<div style="position:absolute;left:766px;top:688px;width:468px;height:526px;background:#2c2c2c;border-radius:8px"></div>
<div style="position:absolute;left:805.90px;top:697.56px;font-size:29.4px;line-height:1;color:#fff;font-weight:400;letter-spacing:-0.600px;white-space:nowrap;will-change:transform;-webkit-text-stroke-width:0.5px;">Reset Parameter</div>
<div style="position:absolute;left:764.5px;top:742px;width:471px;height:4px;background:#5a5a5a;"></div>
<div style="position:absolute;left:805.50px;top:761.49px;font-size:27px;line-height:1;color:#7f7f7f;font-weight:400;letter-spacing:-0.513px;white-space:nowrap;will-change:transform;-webkit-text-stroke-width:0.35px;">KEYFRAMES</div>
<div style="position:absolute;left:830.25px;top:797.56px;font-size:29.4px;line-height:1;color:#fff;font-weight:400;letter-spacing:-0.493px;white-space:nowrap;will-change:transform;-webkit-text-stroke-width:0.5px;">Show In Keyframe Editor</div>
<div style="position:absolute;left:831.10px;top:835.21px;font-size:29.4px;line-height:1;color:#fff;font-weight:400;letter-spacing:-0.750px;white-space:nowrap;will-change:transform;-webkit-text-stroke-width:0.5px;">Add</div>
<div style="position:absolute;left:829.70px;top:873.06px;font-size:29.4px;line-height:1;color:#7b7b7b;font-weight:400;letter-spacing:-0.300px;white-space:nowrap;will-change:transform;-webkit-text-stroke-width:0.35px;">Delete</div>
<div style="position:absolute;left:829.70px;top:911.06px;font-size:29.4px;line-height:1;color:#7b7b7b;font-weight:400;letter-spacing:-0.529px;white-space:nowrap;will-change:transform;-webkit-text-stroke-width:0.35px;">Previous</div>
<div style="position:absolute;left:829.70px;top:948.96px;font-size:29.4px;line-height:1;color:#7b7b7b;font-weight:400;letter-spacing:-0.567px;white-space:nowrap;will-change:transform;-webkit-text-stroke-width:0.35px;">Next</div>
<div style="position:absolute;left:829.70px;top:986.96px;font-size:29.4px;line-height:1;color:#fff;font-weight:400;letter-spacing:-0.156px;white-space:nowrap;will-change:transform;-webkit-text-stroke-width:0.5px;">Disable Animation</div>
<div style="position:absolute;left:764.5px;top:1032px;width:471px;height:4px;background:#5a5a5a;"></div>
<div style="position:absolute;left:807.10px;top:1049.06px;font-size:29.4px;line-height:1;color:#fff;font-weight:400;letter-spacing:-0.538px;white-space:nowrap;will-change:transform;-webkit-text-stroke-width:0.5px;">Add Parameter Behavior</div>
<svg style="position:absolute;left:1194px;top:1055.5px" width="18" height="20" viewBox="0 0 18 20"><path d="M0 0 L18 10 L0 20 Z" fill="#fff"/></svg>
<div style="position:absolute;left:764.5px;top:1094px;width:471px;height:4px;background:#5a5a5a;"></div>
<div style="position:absolute;left:764.5px;top:1108px;width:471px;height:38px;background:#0963d9;"></div>
<div style="position:absolute;left:807.00px;top:1111.46px;font-size:29.4px;line-height:1;color:#fff;font-weight:400;letter-spacing:-0.578px;white-space:nowrap;will-change:transform;-webkit-text-stroke-width:0.5px;">Add To Rig</div>
<svg style="position:absolute;left:1194px;top:1117.4px" width="18" height="20" viewBox="0 0 18 20"><path d="M0 0 L18 10 L0 20 Z" fill="#fff"/></svg>
<div style="position:absolute;left:764.5px;top:1156px;width:471px;height:4px;background:#5a5a5a;"></div>
<div style="position:absolute;left:804.90px;top:1173.06px;font-size:29.4px;line-height:1;color:#fff;font-weight:400;letter-spacing:-0.017px;white-space:nowrap;will-change:transform;-webkit-text-stroke-width:0.5px;">Publish</div>
<div style="position:absolute;left:1235px;top:1099px;width:331px;height:94px;background:#0a0a0a;border-radius:9px"></div>
<div style="position:absolute;left:1236px;top:1100px;width:329px;height:92px;background:#5a5a5a;border-radius:8px"></div>
<div style="position:absolute;left:1238px;top:1102px;width:325px;height:88px;background:#2c2c2c;border-radius:6px"></div>
<div style="position:absolute;left:1278.10px;top:1111.66px;font-size:29.4px;line-height:1;color:#fff;font-weight:400;letter-spacing:-0.608px;white-space:nowrap;will-change:transform;-webkit-text-stroke-width:0.5px;">Create New Rig</div>
<svg style="position:absolute;left:1523px;top:1117px" width="18" height="20" viewBox="0 0 18 20"><path d="M0 0 L18 10 L0 20 Z" fill="#fff"/></svg>
<div style="position:absolute;left:1236.5px;top:1146px;width:328px;height:38px;background:#0963d9;"></div>
<div style="position:absolute;left:1278.10px;top:1148.96px;font-size:29.4px;line-height:1;color:#fff;font-weight:400;letter-spacing:-0.282px;white-space:nowrap;will-change:transform;-webkit-text-stroke-width:0.5px;">Sepia Effect</div>
<svg style="position:absolute;left:1523px;top:1155px" width="18" height="20" viewBox="0 0 18 20"><path d="M0 0 L18 10 L0 20 Z" fill="#fff"/></svg>
<div style="position:absolute;left:1564px;top:1137px;width:315px;height:132px;background:#0a0a0a;border-radius:9px"></div>
<div style="position:absolute;left:1565px;top:1138px;width:313px;height:130px;background:#5a5a5a;border-radius:8px"></div>
<div style="position:absolute;left:1567px;top:1140px;width:309px;height:126px;background:#2c2c2c;border-radius:6px"></div>
<div style="position:absolute;left:1575.80px;top:1149.26px;font-size:29.4px;line-height:1;color:#fff;font-weight:400;letter-spacing:-0.365px;white-space:nowrap;will-change:transform;-webkit-text-stroke-width:0.5px;">Add To New Checkbox</div>
<div style="position:absolute;left:1575.80px;top:1186.86px;font-size:29.4px;line-height:1;color:#fff;font-weight:400;letter-spacing:-0.200px;white-space:nowrap;will-change:transform;-webkit-text-stroke-width:0.5px;">Add To New Pop-up</div>
<div style="position:absolute;left:1565.5px;top:1222px;width:312px;height:38px;background:#0963d9;"></div>
<div style="position:absolute;left:1575.80px;top:1224.96px;font-size:29.4px;line-height:1;color:#fff;font-weight:400;letter-spacing:-0.368px;white-space:nowrap;will-change:transform;-webkit-text-stroke-width:0.5px;">Add To New Slider</div></body></html>
